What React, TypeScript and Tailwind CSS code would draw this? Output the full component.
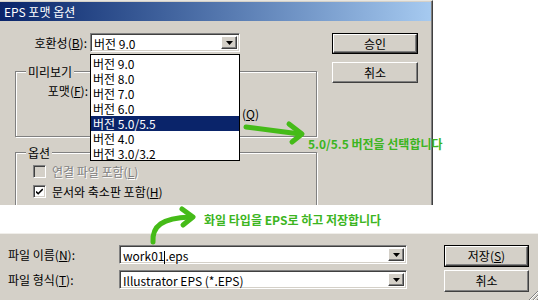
import React from "react";

const raised =
  "border border-t-white border-l-white border-r-[#404040] border-b-[#404040] shadow-[inset_-1px_-1px_0_#808080]";
const sunken =
  "border border-t-[#808080] border-l-[#808080] border-r-white border-b-white shadow-[inset_1px_1px_0_#404040,inset_-1px_-1px_0_#d4d0c8]";
const etched =
  "border border-[#808080] shadow-[inset_1px_1px_0_#fff,1px_1px_0_#fff]";

function Arrow() {
  return (
    <div className={`w-[16px] h-full bg-[#d4d0c8] flex items-center justify-center ${raised}`}>
      <svg width="7" height="4" viewBox="0 0 7 4">
        <path d="M0 0h7L3.5 4z" fill="#000" />
      </svg>
    </div>
  );
}

function Combo({ value, w, h }: { value: React.ReactNode; w: string; h: string }) {
  return (
    <div className={`${w} ${h} bg-white flex items-stretch p-[2px] ${sunken}`}>
      <div className="flex-1 pl-[1px] leading-[15px] text-[12px] whitespace-nowrap">{value}</div>
      <Arrow />
    </div>
  );
}

function Button({ label, def, w, h }: { label: React.ReactNode; def?: boolean; w: string; h: string }) {
  return (
    <div className={`${w} ${h} ${def ? "border border-black" : ""} flex`}>
      <div className={`flex-1 bg-[#d4d0c8] flex items-center justify-center text-[12px] leading-none ${raised}`}>
        {label}
      </div>
    </div>
  );
}

function Check({ checked, disabled, children }: { checked?: boolean; disabled?: boolean; children: React.ReactNode }) {
  return (
    <div className="flex items-center h-[20px]">
      <div className={`w-[13px] h-[13px] flex items-center justify-center ${disabled ? "bg-[#d4d0c8]" : "bg-white"} ${sunken}`}>
        {checked && (
          <svg width="7" height="7" viewBox="0 0 7 7">
            <path d="M0 3.5l2.2 2.2L6.8 1" stroke="#000" strokeWidth="1.6" fill="none" />
          </svg>
        )}
      </div>
      <span
        className={`ml-[6px] text-[12px] leading-[15px] ${disabled ? "text-[#808080] [text-shadow:1px_1px_0_#fff]" : "text-black"}`}
      >
        {children}
      </span>
    </div>
  );
}

const versions = ["버전 9.0", "버전 8.0", "버전 7.0", "버전 6.0", "버전 5.0/5.5", "버전 4.0", "버전 3.0/3.2"];

export default function App() {
  return (
    <div className="relative w-[538px] h-[300px] overflow-hidden bg-white text-black font-['Noto_Sans_CJK_KR',sans-serif] text-[12px]">
      {/* EPS options dialog */}
      <div className="relative w-[433px] h-[205px] overflow-hidden bg-[#d4d0c8] border-t border-t-[#e8e6e0] pt-[1px] border-r border-r-[#404040] shadow-[inset_-1px_0_0_#808080]">
        <div className="h-[19px] mr-[1px] bg-gradient-to-r from-[#0a246a] to-[#a6caf0] flex items-center pl-[4px] text-white text-[12px] leading-none">
          EPS 포맷 옵션
        </div>

        <div className="flex">
          <div className="w-[318px]">
            <div className="mt-[12px] h-[19px] flex items-center">
              <div className="w-[90px] text-right pr-[3px] leading-[15px]">
                호환성(<u>B</u>):
              </div>
              <Combo value="버전 9.0" w="w-[150px]" h="h-[19px]" />
            </div>

            <div className={`relative mt-[19px] ml-[15px] w-[302px] h-[66px] ${etched}`}>
              <span className="absolute -top-[8px] left-[10px] px-[2px] bg-[#d4d0c8] leading-[15px]">미리보기</span>
              <div className="mt-[9px] h-[19px] flex items-center">
                <div className="w-[75px] text-right pr-[3px] leading-[15px]">
                  포맷(<u>F</u>):
                </div>
              </div>
              <div className="mt-[6px] pl-[226px] leading-[15px]">
                (<u>Q</u>)
              </div>
            </div>

            <div className={`relative mt-[15px] ml-[15px] w-[302px] h-[80px] pl-[17px] pt-[8px] ${etched}`}>
              <span className="absolute -top-[8px] left-[10px] px-[2px] bg-[#d4d0c8] leading-[15px]">옵션</span>
              <Check disabled>
                연결 파일 포함(<u>L</u>)
              </Check>
              <Check checked>
                문서와 축소판 포함(<u>H</u>)
              </Check>
            </div>
          </div>

          <div className="ml-[14px] mt-[12px] flex flex-col gap-[8px]">
            <Button label="승인" def w="w-[86px]" h="h-[21px]" />
            <Button label="취소" w="w-[86px]" h="h-[21px]" />
          </div>
        </div>

        {/* open dropdown list */}
        <div className="absolute left-[90px] top-[53px] w-[150px] h-[107px] bg-white border border-black py-[1px]">
          {versions.map((v, i) => (
            <div
              key={v}
              className={`h-[15px] pl-[2px] leading-[15px] ${i === 4 ? "bg-[#0a246a] text-white" : "text-black"}`}
            >
              {v}
            </div>
          ))}
        </div>
      </div>

      {/* annotation between dialogs */}
      <div className="h-[28px] pl-[204px] pt-[8px] text-[12px] leading-[14px] font-bold text-[#3cb521] whitespace-nowrap">
        화일 타입을 EPS로 하고 저장합니다
      </div>

      {/* save dialog */}
      <div className="relative h-[67px] bg-[#d4d0c8] border-t border-t-[#f0eeea] flex pt-[11px]">
        <div className="flex flex-col gap-[6px]">
          <div className="flex items-center h-[19px]">
            <div className="w-[119px] pl-[8px] leading-[15px]">
              파일 이름(<u>N</u>):
            </div>
            <Combo
              value={
                <>
                  work01
                  <span className="inline-block w-[1px] h-[13px] bg-black align-middle" />
                  .eps
                </>
              }
              w="w-[288px]"
              h="h-[19px]"
            />
          </div>
          <div className="flex items-center h-[19px]">
            <div className="w-[119px] pl-[8px] leading-[15px]">
              파일 형식(<u>T</u>):
            </div>
            <Combo value="Illustrator EPS (*.EPS)" w="w-[288px]" h="h-[19px]" />
          </div>
        </div>
        <div className="ml-[37px] flex flex-col gap-[3px]">
          <Button
            label={
              <>
                저장(<u>S</u>)
              </>
            }
            def
            w="w-[85px]"
            h="h-[22px]"
          />
          <Button label="취소" w="w-[85px]" h="h-[22px]" />
        </div>
        <svg className="absolute right-0 bottom-0" width="10" height="10" viewBox="0 0 10 10">
          <path d="M10 1L1 10M10 5L5 10M10 9L9 10" stroke="#808080" strokeWidth="1" />
          <path d="M10 2L2 10M10 6L6 10" stroke="#fff" strokeWidth="1" />
        </svg>
      </div>

      {/* annotation over the options dialog */}
      <div className="absolute left-[308px] top-[137px] text-[12px] leading-[14px] font-bold text-[#3cb521] whitespace-nowrap">
        5.0/5.5 버전을 선택합니다
      </div>

      <svg className="absolute left-0 top-0 pointer-events-none" width="538" height="300" viewBox="0 0 538 300">
        <g stroke="#45bb18" strokeWidth="5" strokeLinecap="round" strokeLinejoin="round" fill="none">
          <path d="M246 127 L300 134" />
          <path d="M289 124 L302 134 L292 142" />
          <path d="M153 242 C152 226 162 218 190 217" />
          <path d="M182 209 L193 217 L183 225" />
        </g>
      </svg>
    </div>
  );
}
